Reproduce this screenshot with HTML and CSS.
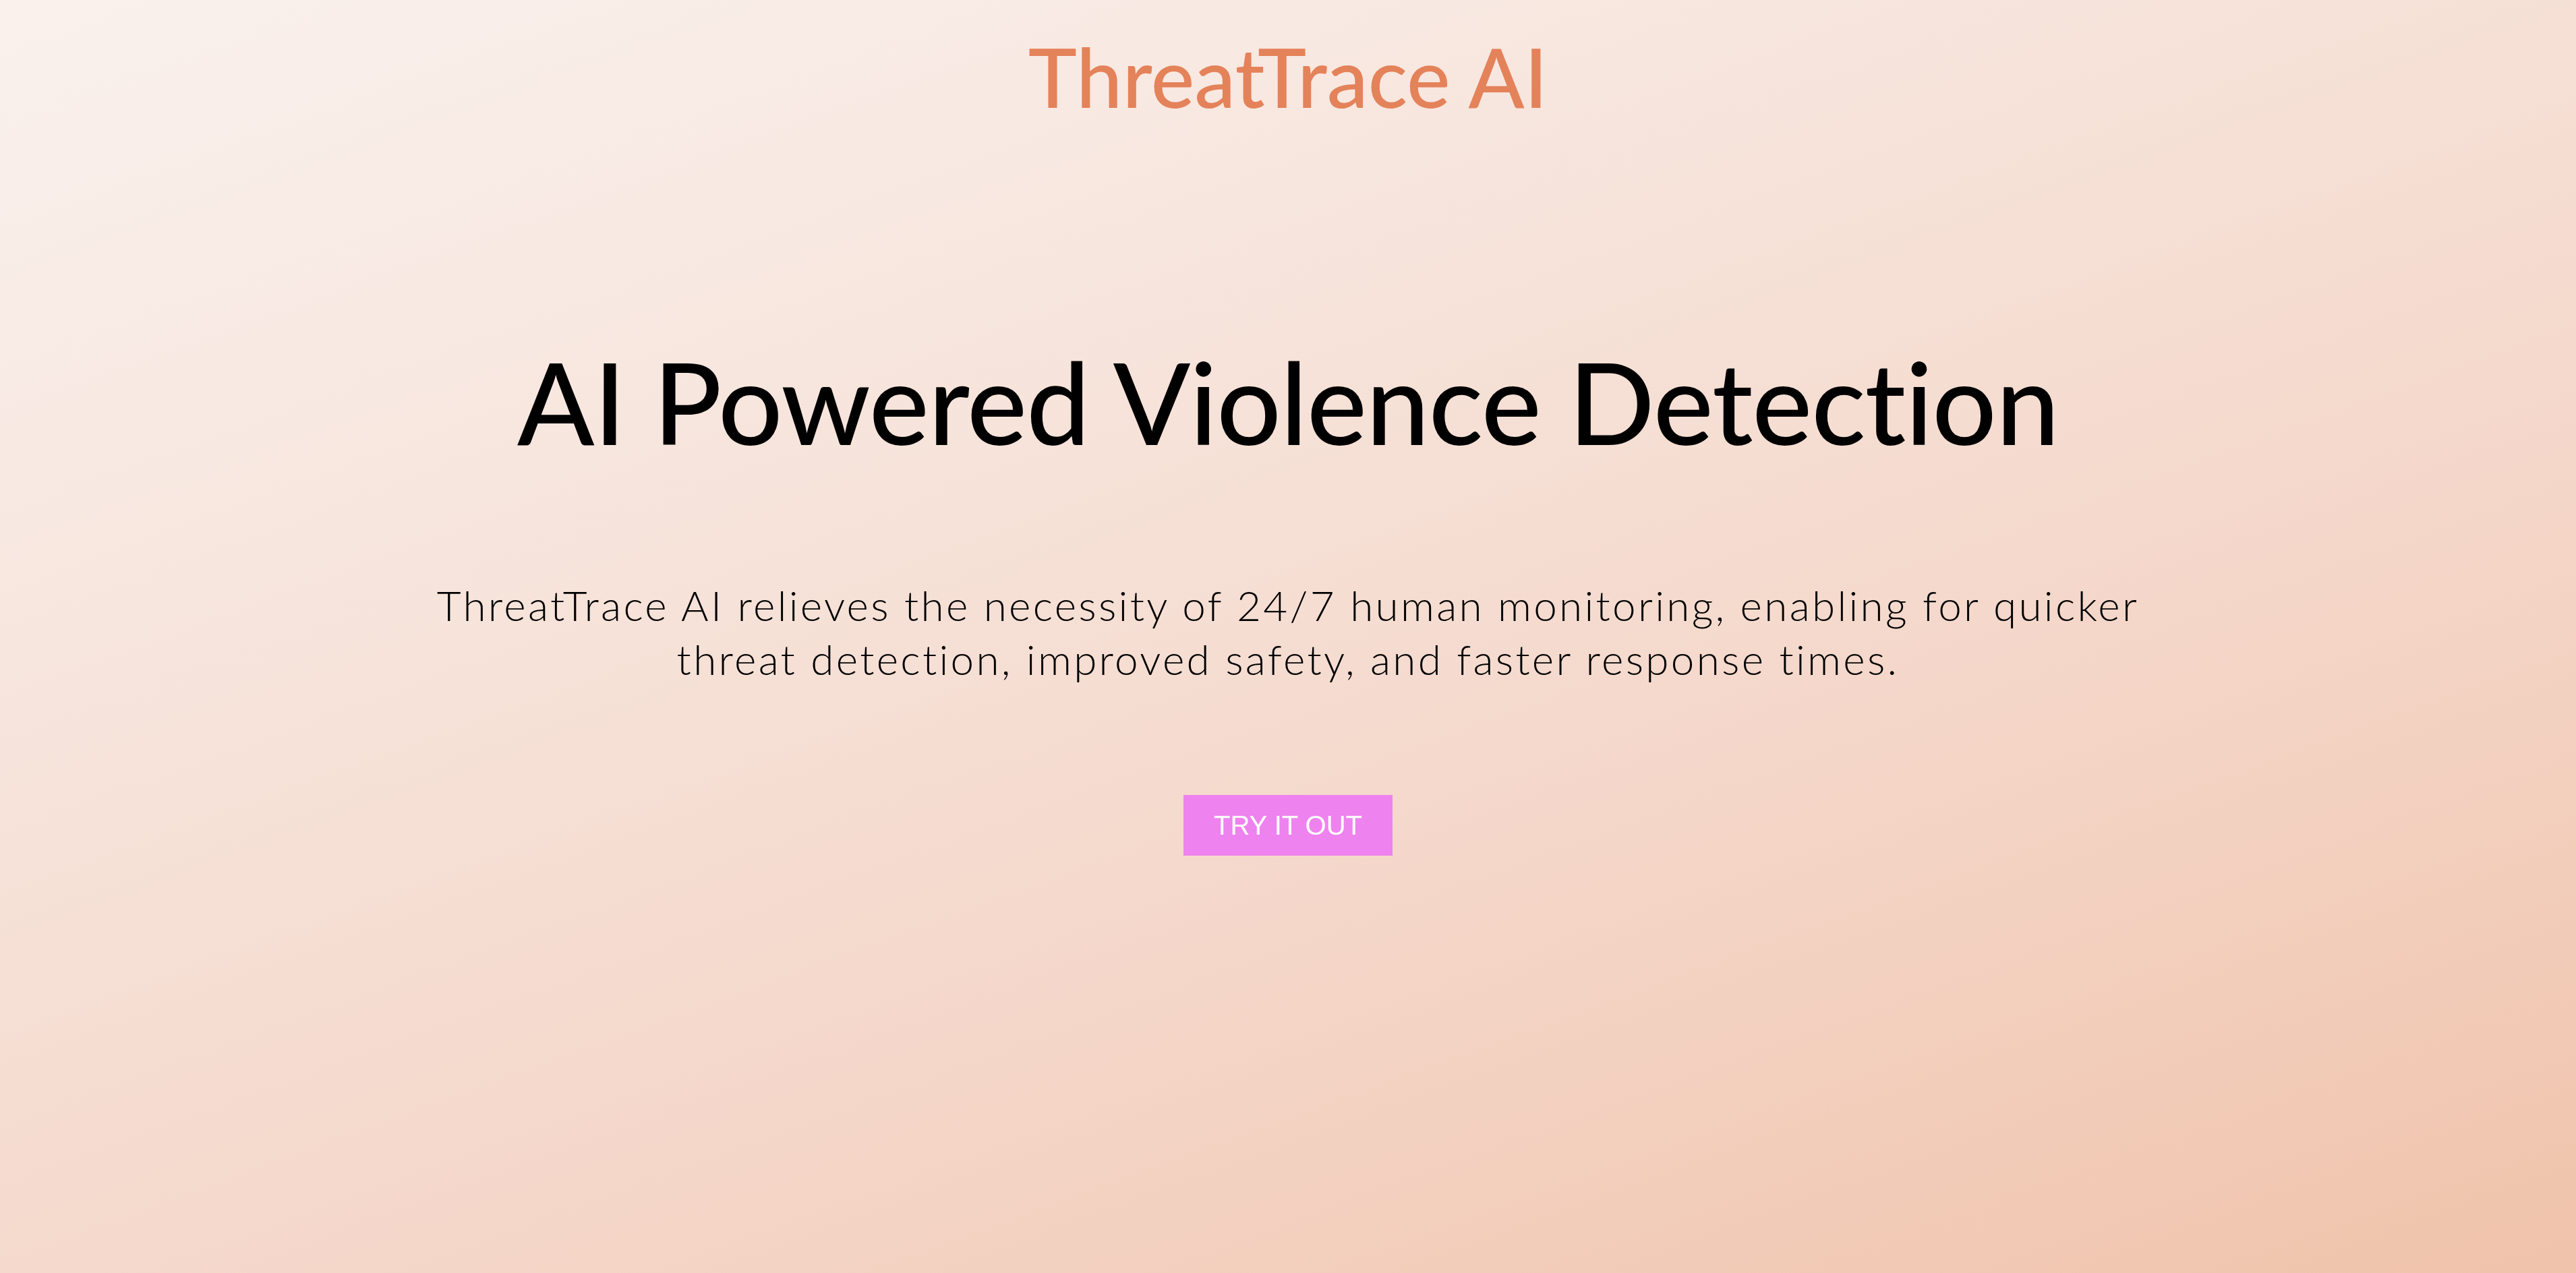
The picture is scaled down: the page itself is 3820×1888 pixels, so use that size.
FILE: index.html
```html
<!DOCTYPE html>
<html lang="en">
<head>
<meta charset="utf-8">
<title>ThreatTrace AI</title>
<link rel="stylesheet" href="styles.css">
</head>
<body>
<div class="page">
  <header class="site-header">
    <h1 class="brand">ThreatTrace AI</h1>
  </header>
  <main class="hero">
    <h2 class="hero-title">AI Powered Violence Detection</h2>
    <p class="hero-text">ThreatTrace AI relieves the necessity of 24/7 human monitoring, enabling for quicker threat detection, improved safety, and faster response times.</p>
    <button class="cta" type="button">TRY IT OUT</button>
  </main>
</div>
</body>
</html>
```
FILE: styles.css
```css
html, body {
  margin: 0;
  padding: 0;
}
body {
  min-height: 100vh;
  background: linear-gradient(160deg, #faf1ed 0%, #f7e6de 30%, #f4d6c8 65%, #f0c3ab 100%);
  font-family: Lato, "Noto Sans", sans-serif;
  color: #000;
}
.page {
  min-height: 100vh;
  display: flex;
  flex-direction: column;
  align-items: center;
}
.site-header {
  padding-top: 40px;
  display: flex;
  justify-content: center;
}
.brand {
  margin: 0;
  font-size: 122px;
  line-height: 1.2;
  font-weight: 500;
  color: #e4825a;
  letter-spacing: 0;
}
.hero {
  display: flex;
  flex-direction: column;
  align-items: center;
  text-align: center;
  padding-top: 309px;
}
.hero-title {
  margin: 0;
  font-size: 168px;
  line-height: 1.2;
  font-weight: 500;
  letter-spacing: -1px;
}
.hero-text {
  margin: 160px 0 0;
  max-width: 2600px;
  font-size: 62px;
  line-height: 80px;
  font-weight: 300;
  letter-spacing: 3.3px;
}
.cta {
  margin-top: 162px;
  padding: 22px 45px;
  border: none;
  border-radius: 0;
  background: #ee82ee;
  color: #fff;
  font-family: "Liberation Sans", Arial, sans-serif;
  font-size: 40px;
  line-height: 46px;
  cursor: pointer;
}
```
